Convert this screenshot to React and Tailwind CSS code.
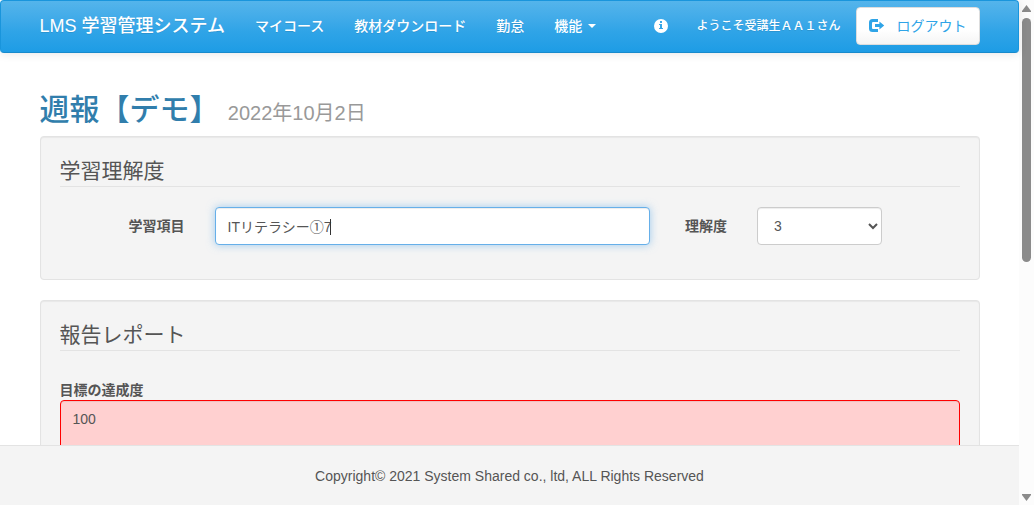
import React from "react";

const NAV_LINKS = ["マイコース", "教材ダウンロード", "勤怠"];

function InfoIcon() {
  return (
    <svg viewBox="0 0 14 14" className="h-3.5 w-3.5" aria-hidden="true">
      <path
        fill="currentColor"
        fillRule="evenodd"
        d="M7 0a7 7 0 1 0 0 14A7 7 0 0 0 7 0ZM6 2h2v2H6V2ZM5 5h3v4h1v1H5V9h1V6H5V5Z"
      />
    </svg>
  );
}

function LogOutIcon() {
  return (
    <svg viewBox="0 0 16 14" className="h-3.5 w-4" aria-hidden="true">
      <path
        fill="currentColor"
        d="M9 0V3H4Q3 3 3 4V9Q3 10 4 10H9V13H3.5Q0 13 0 9.5V3.5Q0 0 3.5 0ZM10.4 2.4 15.2 6.5 10.4 10.6V8H6V5H10.4Z"
      />
    </svg>
  );
}

function Navbar() {
  return (
    <header className="relative z-10 shrink-0 rounded-sm border border-[#1995dc] border-b-[#178acc] bg-linear-to-b from-[#54b4eb] via-[#2fa4e7] via-60% to-[#1d9ce5] shadow-[0_1px_10px_rgba(0,0,0,0.1)]">
      <div className="mx-auto flex h-[51px] max-w-[940px] items-center justify-between pb-0.5 text-sm font-medium text-white">
        <nav className="flex items-center gap-[30px] whitespace-nowrap text-shadow-[0_1px_0_rgba(0,0,0,0.1)]">
          <a href="#" className="text-[18px] leading-5">
            LMS 学習管理システム
          </a>
          {NAV_LINKS.map((label) => (
            <a key={label} href="#" className="leading-5">
              {label}
            </a>
          ))}
          <button type="button" className="flex items-center gap-1.5 leading-5">
            機能
            <svg viewBox="0 0 8 4" className="h-1 w-2" aria-hidden="true">
              <path fill="currentColor" d="M0 0h8L4 4Z" />
            </svg>
          </button>
        </nav>
        <div className="flex items-center whitespace-nowrap">
          <a href="#" aria-label="お知らせ" className="mr-7">
            <InfoIcon />
          </a>
          <span className="mr-[15px] text-xs text-shadow-[0_1px_0_rgba(0,0,0,0.1)]">
            ようこそ受講生ＡＡ１さん
          </span>
          <button
            type="button"
            className="flex h-[38px] items-center gap-3 rounded-sm border border-[#dddddd] bg-linear-to-b from-white via-white via-60% to-[#f5f5f5] px-3 font-normal text-[#2fa4e7]"
          >
            <LogOutIcon />
            ログアウト
          </button>
        </div>
      </div>
    </header>
  );
}

function Well({ title, children }) {
  return (
    <fieldset className="mb-5 flow-root rounded-sm border border-[#e3e3e3] bg-[#f4f4f4] p-[19px] shadow-[inset_0_1px_1px_rgba(0,0,0,0.05)]">
      <h2 className="mb-5 border-b border-[#e3e3e3] text-[21px] leading-[30px]">{title}</h2>
      {children}
    </fieldset>
  );
}

function Scrollbar() {
  return (
    <div
      aria-hidden="true"
      className="flex w-[15px] shrink-0 flex-col items-center bg-[#fcfcfc] text-[#8b8b8b]"
    >
      <svg viewBox="0 0 15 18" className="h-[18px] w-[15px]">
        <path fill="currentColor" d="M7.5 5 12 11v1H3v-1Z" />
      </svg>
      <div className="w-full flex-1">
        <div className="mx-auto h-[52%] w-[9px] rounded-full bg-[#8b8b8b]" />
      </div>
      <svg viewBox="0 0 15 18" className="h-[18px] w-[15px]">
        <path fill="currentColor" d="M3 7h9v1L7.5 14 3 8Z" />
      </svg>
    </div>
  );
}

export default function App() {
  return (
    <div className="flex h-screen overflow-hidden bg-white font-['Liberation_Sans','Noto_Sans_CJK_JP',sans-serif] text-sm leading-5 text-[#555555]">
      <div className="flex min-w-0 flex-1 flex-col">
        <Navbar />
        <main className="min-h-0 flex-1 overflow-hidden">
          <div className="mx-auto max-w-[940px] pt-10">
            <h1 className="mb-1.5 text-[30px] leading-[33px] font-medium text-[#317eac]">
              週報【デモ】{" "}
              <small className="text-[20px] font-normal text-[#999999]">2022年10月2日</small>
            </h1>
            <form>
              <Well title="学習理解度">
                <div className="-mx-[15px] mb-[15px] grid grid-cols-12">
                  <label htmlFor="item" className="col-span-2 px-[15px] pt-[9px] text-right font-bold">
                    学習項目
                  </label>
                  <div className="col-span-6 px-[15px]">
                    <div className="relative">
                      <input
                        id="item"
                        type="text"
                        defaultValue="ITリテラシー①7"
                        className="h-[38px] w-full rounded-sm border border-[#66afe9] bg-white px-3 shadow-[inset_0_1px_1px_rgba(0,0,0,0.075),0_0_8px_rgba(102,175,233,0.6)] outline-none"
                      />
                      <span
                        aria-hidden="true"
                        className="absolute top-3 left-[115px] h-4 w-px bg-[#333333]"
                      />
                    </div>
                  </div>
                  <label
                    htmlFor="level"
                    className="px-[15px] pt-[9px] text-right font-bold whitespace-nowrap"
                  >
                    理解度
                  </label>
                  <div className="col-span-2 px-[15px]">
                    <select
                      id="level"
                      defaultValue="3"
                      className="h-[38px] w-full rounded-sm border border-[#cccccc] bg-white px-3 shadow-[inset_0_1px_1px_rgba(0,0,0,0.075)]"
                    >
                      <option>1</option>
                      <option>2</option>
                      <option>3</option>
                      <option>4</option>
                      <option>5</option>
                    </select>
                  </div>
                </div>
              </Well>
              <Well title="報告レポート">
                <label htmlFor="goal" className="block pt-[9px] font-bold">
                  目標の達成度
                </label>
                <textarea
                  id="goal"
                  rows={5}
                  defaultValue="100"
                  className="block w-full resize-none rounded-sm border border-[#ff0000] bg-[#ffd0d0] px-3 py-2 shadow-[inset_0_1px_1px_rgba(0,0,0,0.075)]"
                />
              </Well>
            </form>
          </div>
        </main>
        <footer className="flex h-[60px] shrink-0 items-center justify-center border-t border-[#e3e3e3] bg-[#f4f4f4]">
          <p>Copyright© 2021 System Shared co., ltd, ALL Rights Reserved</p>
        </footer>
      </div>
      <Scrollbar />
    </div>
  );
}
